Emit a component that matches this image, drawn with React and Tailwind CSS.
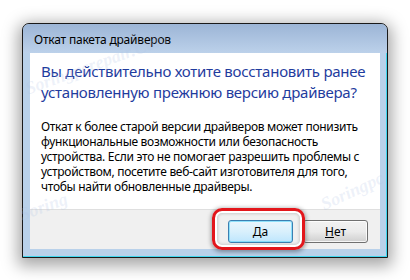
export default function App() {
  const font = { fontFamily: '"Noto Sans", "Segoe UI", sans-serif' };
  const wm = { fontFamily: '"Liberation Serif", serif' };
  return (
    <div className="relative w-[410px] h-[280px] bg-white overflow-hidden pt-[23px] pl-[22px]" style={font}>
      <div className="w-[366px] h-[235px] rounded-t-[7px] border border-[#1a1a1a] bg-[#b9d1ea] shadow-[0_4px_16px_4px_rgba(0,0,0,0.35)] flex flex-col overflow-hidden">
        <div className="h-[29px] shrink-0 bg-gradient-to-b from-[#9cb5d6] to-[#bcd1ea] rounded-t-[6px] flex items-center pl-[11px] pt-[2px] text-[12px] tracking-[-0.2px] text-black">
          Откат пакета драйверов
        </div>
        <div className="flex-1 flex flex-col px-[7px] border-r border-b border-[#3fd6ee]">
          <div className="flex flex-col h-[196px] w-[350px]">
            <div className="h-[156px] bg-white pl-[11px] pt-[8px]">
              <div className="text-[15px] leading-[21px] tracking-[-0.25px] text-[#1f3c9e] whitespace-nowrap">
                Вы действительно хотите восстановить ранее
                <br />
                установленную прежнюю версию драйвера?
              </div>
              <div className="mt-[16px] text-[12px] leading-[15px] tracking-[-0.3px] text-black whitespace-nowrap">
                Откат к более старой версии драйверов может понизить
                <br />
                функциональные возможности или безопасность
                <br />
                устройства. Если это не помогает разрешить проблемы с
                <br />
                устройством, посетите веб-сайт изготовителя для того,
                <br />
                чтобы найти обновленные драйверы.
              </div>
            </div>
            <div className="h-[40px] bg-[#f0f0f0] border-t border-[#dfdfdf] flex justify-end gap-[10px] pr-[12px] pt-[10px]">
              <div className="w-[65px] h-[23px] rounded-[3px] border border-[#3c7fb1] bg-gradient-to-b from-[#eaf6fd] via-[#d9f0fc] to-[#bee6fd] shadow-[inset_0_0_0_1px_rgba(120,220,250,0.8)] flex items-center justify-center text-[12px] text-black">
                Да
              </div>
              <div className="w-[65px] h-[23px] rounded-[3px] border border-[#707070] bg-gradient-to-b from-[#f2f2f2] via-[#ebebeb] to-[#cfcfcf] shadow-[inset_0_0_0_1px_rgba(255,255,255,0.8)] flex items-center justify-center text-[12px] text-black">
                <span><span className="underline">Н</span>ет</span>
              </div>
            </div>
          </div>
        </div>
      </div>
      <div className="pointer-events-none absolute left-[26px] top-[76px] text-[18px] italic font-bold text-[rgba(175,195,228,0.22)] -rotate-[20deg] origin-left whitespace-nowrap" style={wm}>
        Soringpcrepair.Com
      </div>
      <div className="pointer-events-none absolute left-[20px] top-[202px] text-[18px] italic font-bold text-[rgba(175,195,228,0.22)] -rotate-[20deg] origin-left whitespace-nowrap" style={wm}>
        Soring
      </div>
      <div className="pointer-events-none absolute left-[322px] top-[192px] text-[18px] italic font-bold text-[rgba(175,195,228,0.22)] -rotate-[25deg] origin-left whitespace-nowrap" style={wm}>
        Soringpc
      </div>
      <div className="absolute left-[212px] top-[208px] w-[93px] h-[42px] rounded-[10px] border-[3px] border-[#e3161b] shadow-[0_1px_4px_1px_rgba(0,0,0,0.35),inset_0_0_0_2px_#ffffff,inset_0_0_3px_3px_rgba(0,0,0,0.15)]"></div>
    </div>
  );
}
